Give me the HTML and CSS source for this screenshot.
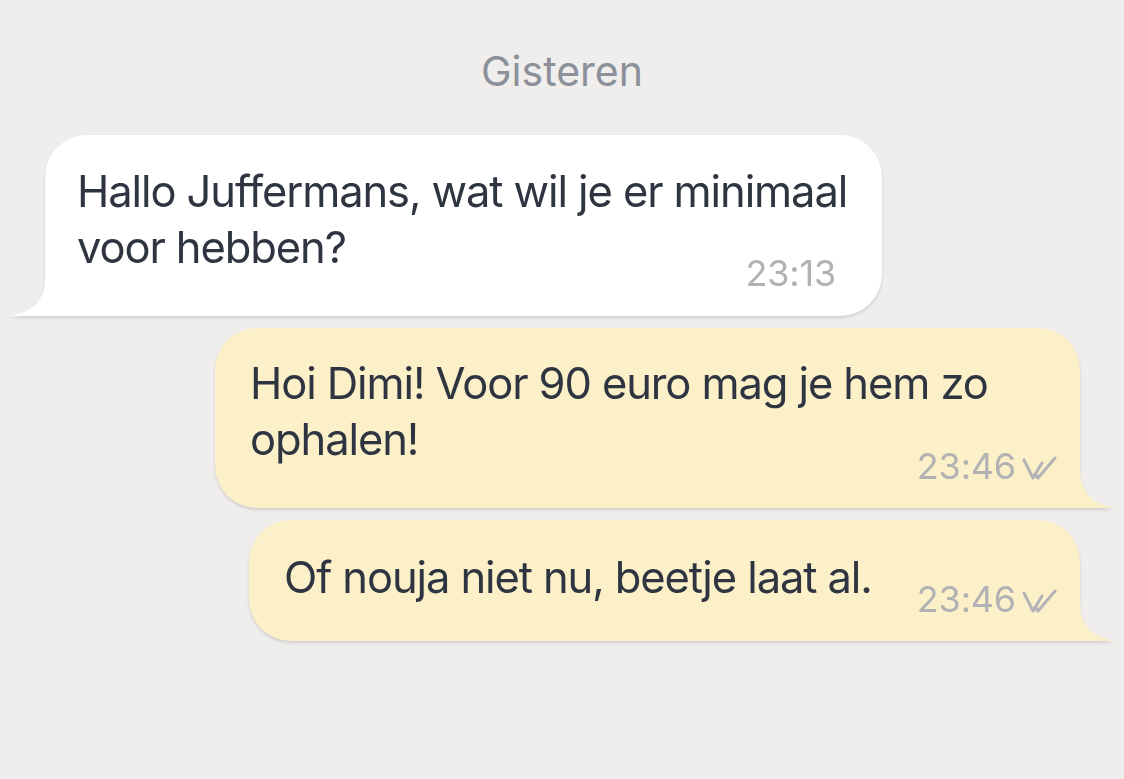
FILE: index.html
```html
<!DOCTYPE html>
<html lang="nl">
<head>
<meta charset="utf-8">
<title>Chat</title>
<link rel="stylesheet" href="styles.css">
</head>
<body>
<main class="chat">
  <div class="day">Gisteren</div>

  <div class="row row-in">
    <div class="bubble bubble-in">
      <svg class="tail tail-in" width="40" height="40" viewBox="0 0 40 40"><path d="M40 0 L37 0 L37 2 Q37 36 0 40 L40 40 Z" fill="#ffffff"/></svg>
      <p class="text">Hallo Juffermans, wat wil je er minimaal voor hebben?</p>
      <div class="meta meta-in"><span class="time">23:13</span></div>
    </div>
  </div>

  <div class="row row-out">
    <div class="bubble bubble-out out-1">
      <svg class="tail tail-out" width="40" height="40" viewBox="0 0 40 40"><path d="M0 0 L3 0 L3 2 Q3 36 40 40 L0 40 Z" fill="#fcf0c9"/></svg>
      <p class="text">Hoi Dimi! Voor 90 euro mag je hem zo ophalen!</p>
      <div class="meta meta-out"><span class="time">23:46</span><svg class="ticks" width="36" height="24" viewBox="0 0 36 24"><path d="M2 4 L11 22 L20 7 M13 18 L16 22 L33 2" fill="none" stroke="#b3b3b6" stroke-width="3" stroke-linecap="round" stroke-linejoin="round"/></svg></div>
    </div>
  </div>

  <div class="row row-out">
    <div class="bubble bubble-out out-2">
      <svg class="tail tail-out" width="40" height="40" viewBox="0 0 40 40"><path d="M0 0 L3 0 L3 2 Q3 36 40 40 L0 40 Z" fill="#fcf0c9"/></svg>
      <p class="text">Of nouja niet nu, beetje laat al.</p>
      <div class="meta meta-out meta-single"><span class="time">23:46</span><svg class="ticks" width="36" height="24" viewBox="0 0 36 24"><path d="M2 4 L11 22 L20 7 M13 18 L16 22 L33 2" fill="none" stroke="#b3b3b6" stroke-width="3" stroke-linecap="round" stroke-linejoin="round"/></svg></div>
    </div>
  </div>
</main>
</body>
</html>
```

FILE: styles.css
```css
html, body {
  margin: 0;
  padding: 0;
}
body {
  background: #efeeec;
  font-family: Inter, "Noto Sans", "Liberation Sans", sans-serif;
  color: #2e3541;
  width: 1124px;
  height: 779px;
  overflow: hidden;
}
.chat {
  display: flex;
  flex-direction: column;
  padding-top: 47px;
}
.day {
  text-align: center;
  font-size: 41px;
  line-height: 49px;
  color: #8b9099;
  margin-bottom: 39px;
}
.row {
  display: flex;
  margin-bottom: 12px;
}
.row-in {
  justify-content: flex-start;
  padding-left: 45px;
}
.row-out {
  justify-content: flex-end;
  padding-right: 44px;
}
.bubble {
  position: relative;
  border-radius: 42px;
  box-sizing: border-box;
  filter: drop-shadow(0 2px 1.5px rgba(0, 0, 0, 0.13));
}
.bubble-in {
  background: #ffffff;
  width: 837px;
  border-bottom-left-radius: 0;
  padding: 28px 16px 23px 32px;
}
.bubble-out {
  background: #fcf0c9;
  border-bottom-right-radius: 0;
  padding: 27px 22px 22px 35px;
}
.out-1 { width: 865px; }
.out-2 { width: 831px; padding-top: 29px; padding-left: 35px; }
.tail {
  position: absolute;
  bottom: 0;
  display: block;
}
.tail-in { left: -37px; }
.tail-out { right: -37px; }
.text {
  margin: 0;
  font-size: 43.5px;
  line-height: 56px;
  letter-spacing: -1.1px;
}
.meta {
  display: flex;
  justify-content: flex-end;
  align-items: center;
  margin-top: -22px;
  height: 40px;
}
.meta-in { margin-right: 30px; }
.meta-out { margin-top: -21px; }
.meta-single { margin-top: -26px; }
.time {
  font-size: 36px;
  line-height: 40px;
  color: #b2b2b5;
  letter-spacing: -0.2px;
}
.ticks {
  display: block;
  margin-left: 6px;
  margin-top: 4px;
}
```
